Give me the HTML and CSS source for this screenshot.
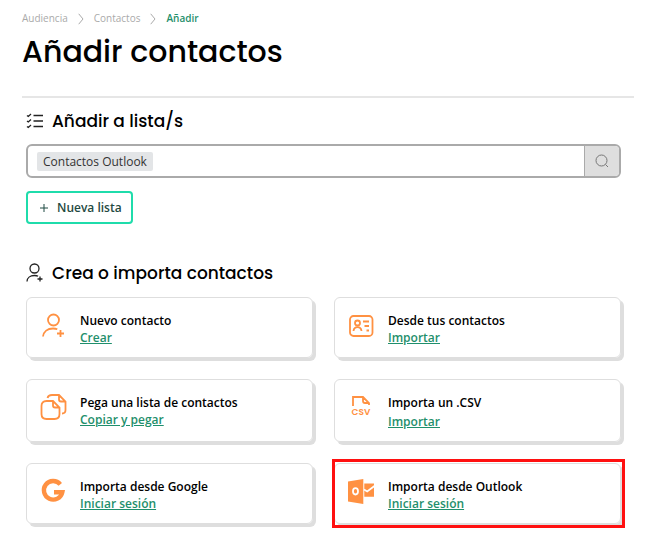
FILE: index.html
```html
<!DOCTYPE html>
<html lang="es">
<head>
    <meta charset="UTF-8">
    <meta name="viewport" content="width=device-width, initial-scale=1.0">
    <title>Añadir contactos</title>
    <link rel="stylesheet" href="styles.css">
</head>
<body>

    <header class="page-header">
        <nav class="breadcrumb" aria-label="Ruta">
            <a href="#">Audiencia</a>
            <svg width="6" height="12" viewBox="0 0 6 12"><path d="M.7.8 5 6 .7 11.2"/></svg>
            <a href="#">Contactos</a>
            <svg width="6" height="12" viewBox="0 0 6 12"><path d="M.7.8 5 6 .7 11.2"/></svg>
            <a href="#" class="current" aria-current="page">Añadir</a>
        </nav>
        <h1>Añadir contactos</h1>
    </header>

    <main>
        <section class="lists">
            <h2>
                <svg class="line" width="18" height="18" viewBox="0 0 18 18"><path d="M1 3.5 2.3 4.5 5 2M1 9 2.3 10 5 7.5M1 14.500 2.3 15.500 5 13M7.500 3.500H17M7.500 9H17M7.500 14.500H17"/></svg>
                <label for="list-search">Añadir a lista/s</label>
            </h2>
            <div class="list-box">
                <span class="tag">Contactos Outlook</span>
                <input type="text" id="list-search">
                <button type="button" class="search-btn" aria-label="Buscar">
                    <svg width="14" height="14" viewBox="0 0 14 14"><circle cx="6.500" cy="6.500" r="5.500"/><path d="m10.500 10.500 2.500 2.500"/></svg>
                </button>
            </div>
            <button type="button" class="new-btn">
                <svg width="8" height="8" viewBox="0 0 8 8"><path d="M4 0v8M0 4h8"/></svg>
                Nueva lista
            </button>
        </section>

        <section>
            <h2>
                <svg class="line" width="18" height="20" viewBox="0 0 18 20"><circle cx="8.500" cy="5.500" r="4.500"/><path d="M1 18.500c0-3.500 3-6 7.500-6q2.500 0 3.500.8M14 13.500v5M11.500 16h5"/></svg>
                Crea o importa contactos
            </h2>
            <div class="cards">
                <article class="card">
                    <svg class="icon" viewBox="0 0 28 28"><circle cx="14.500" cy="8" r="5.500"/><path d="M4 24.500c.6-5 4.500-8 10-8 1.600 0 3 .2 4.300.8M21.500 18v7M18 21.500h7"/></svg>
                    <div>
                        <h3>Nuevo contacto</h3>
                        <a href="#">Crear</a>
                    </div>
                </article>

                <article class="card">
                    <svg class="icon" viewBox="0 0 28 28"><rect x="3" y="4" width="22.500" height="20" rx="3.500"/><circle cx="10.500" cy="11" r="2.500"/><path d="M6.500 19c.3-2.600 1.700-3.800 4-3.800s3.700 1.200 4 3.800M16 9.500h6M17.500 14H22M19.500 18.500H22"/></svg>
                    <div>
                        <h3>Desde tus contactos</h3>
                        <a href="#">Importar</a>
                    </div>
                </article>

                <article class="card">
                    <svg class="icon" viewBox="0 0 28 28"><path d="M14 7H7.500C4 7 2.500 9 2.500 12v8c0 3.500 1.500 5 5 5h8c3.500 0 5-1.500 5-5v-6.500zv4.500q0 2 2 2h4.500M8.500 4c.5-2 2-3 4.500-3h7l6.500 6.500V16c0 2.200-1 3.500-3.500 3.500M20 1v4.500q0 2 2 2h4.500"/></svg>
                    <div>
                        <h3>Pega una lista de contactos</h3>
                        <a href="#">Copiar y pegar</a>
                    </div>
                </article>

                <article class="card csv">
                    <div class="icon csv-icon" aria-hidden="true">
                        <svg width="18" height="11" viewBox="0 0 18 11"><path d="M1 10V1h10l6 6v2M11 1v4q0 2 2 2h4"/></svg>
                        <span>CSV</span>
                    </div>
                    <div>
                        <h3>Importa un .CSV</h3>
                        <a href="#">Importar</a>
                    </div>
                </article>

                <article class="card">
                    <svg class="icon" viewBox="0 0 28 28"><path class="google" d="M21.300 6.300A9.300 9.300 0 1 0 23.300 14.200H15"/></svg>
                    <div>
                        <h3>Importa desde Google</h3>
                        <a href="#">Iniciar sesión</a>
                    </div>
                </article>

                <article class="card highlight">
                    <svg class="icon" viewBox="0 0 28 28">
                        <path class="solid" d="M1 3.500 16.300 1v25L1 23.500zM17.300 5.500H27v13.200h-9.700z"/>
                        <ellipse class="white" cx="8.500" cy="13.300" rx="2.500" ry="3.200"/>
                        <path class="white" d="m17 11.500 3.200 2L27.500 8"/>
                    </svg>
                    <div>
                        <h3>Importa desde Outlook</h3>
                        <a href="#">Iniciar sesión</a>
                    </div>
                </article>
            </div>
        </section>
    </main>

</body>
</html>
```
FILE: styles.css
```css
* {
    margin: 0;
    padding: 0;
    box-sizing: border-box;
}

body {
    padding: 10px 22px;
    background: #fff;
    color: #1c1c1c;
    font-family: 'Open Sans', sans-serif;
    font-size: 12px;
    line-height: 17px;
}

button,
input {
    font: inherit;
}

svg {
    flex-shrink: 0;
    fill: none;
    stroke: currentColor;
}

h1,
h2 {
    font-family: 'Poppins', 'Inter', sans-serif;
    font-weight: 500;
    color: #000;
}

/* Header */
.page-header {
    padding-bottom: 24px;
    border-bottom: 2px solid #e6e6e6;
}

.breadcrumb {
    display: flex;
    align-items: center;
    gap: 10px;
    font-size: 10px;
    color: #aaa;
}

.breadcrumb a {
    color: #aaa;
    text-decoration: none;
}

.breadcrumb .current {
    color: #1f8f6c;
    font-weight: 600;
}

h1 {
    margin-top: 5px;
    font-size: 30px;
    line-height: 40px;
}

/* Lists */
main {
    padding: 13px 13px 0 4px;
}

h2 {
    display: flex;
    align-items: center;
    gap: 8px;
    font-size: 17px;
    line-height: 20px;
}

.line {
    color: #222;
    stroke-width: 1.3;
}

.lists {
    margin-bottom: 39px;
}

.list-box {
    display: flex;
    align-items: center;
    height: 34px;
    margin: 13px 0;
    padding-left: 9px;
    border: 2px solid #aaa;
    border-radius: 6px;
    overflow: hidden;
}

.tag {
    padding: 1px 6px;
    border-radius: 2px;
    background: #e3e5e7;
    color: #333;
}

.list-box input {
    flex: 1;
    min-width: 0;
    border: none;
    outline: none;
}

.search-btn {
    display: flex;
    align-items: center;
    justify-content: center;
    align-self: stretch;
    width: 35px;
    border: none;
    border-left: 1px solid #aaa;
    background: #dedede;
    color: #777;
    cursor: pointer;
}

.new-btn {
    display: flex;
    align-items: center;
    gap: 9px;
    height: 33px;
    padding: 0 9px 0 12px;
    border: 2px solid #1fdcab;
    border-radius: 4px;
    background: #fff;
    color: #1f4a42;
    font-weight: 550;
    cursor: pointer;
}

/* Cards */
.cards {
    display: grid;
    grid-template-columns: 1fr 1fr;
    gap: 21px;
    margin-top: 14px;
}

.card {
    position: relative;
    display: flex;
    gap: 13px;
    padding: 14px 12px 11px;
    border: 1px solid #dedede;
    border-radius: 6px;
    box-shadow: 3px 3px 0 #dedede;
}

h3 {
    font-size: 12px;
    font-weight: 550;
    color: #000;
}

.card a {
    display: block;
    color: #1f8f6c;
    font-weight: 550;
}

.csv a {
    margin-top: 2px;
}

.icon {
    width: 28px;
    height: 28px;
    color: #ff9142;
    stroke-width: 1.8;
}

.solid {
    fill: currentColor;
    stroke: none;
}

.white {
    stroke: #fff;
}

.google {
    stroke-width: 4.4;
}

.csv-icon {
    display: flex;
    flex-direction: column;
    align-items: center;
    padding-top: 2px;
    font-family: 'Poppins', 'Inter', sans-serif;
    font-size: 9px;
    font-weight: 600;
    line-height: 10px;
}

.highlight::after {
    content: "";
    position: absolute;
    inset: -5px -5px -5px -3px;
    border: 3px solid #ff1010;
}

@media (max-width: 480px) {
    .cards {
        grid-template-columns: 1fr;
    }
}
```
